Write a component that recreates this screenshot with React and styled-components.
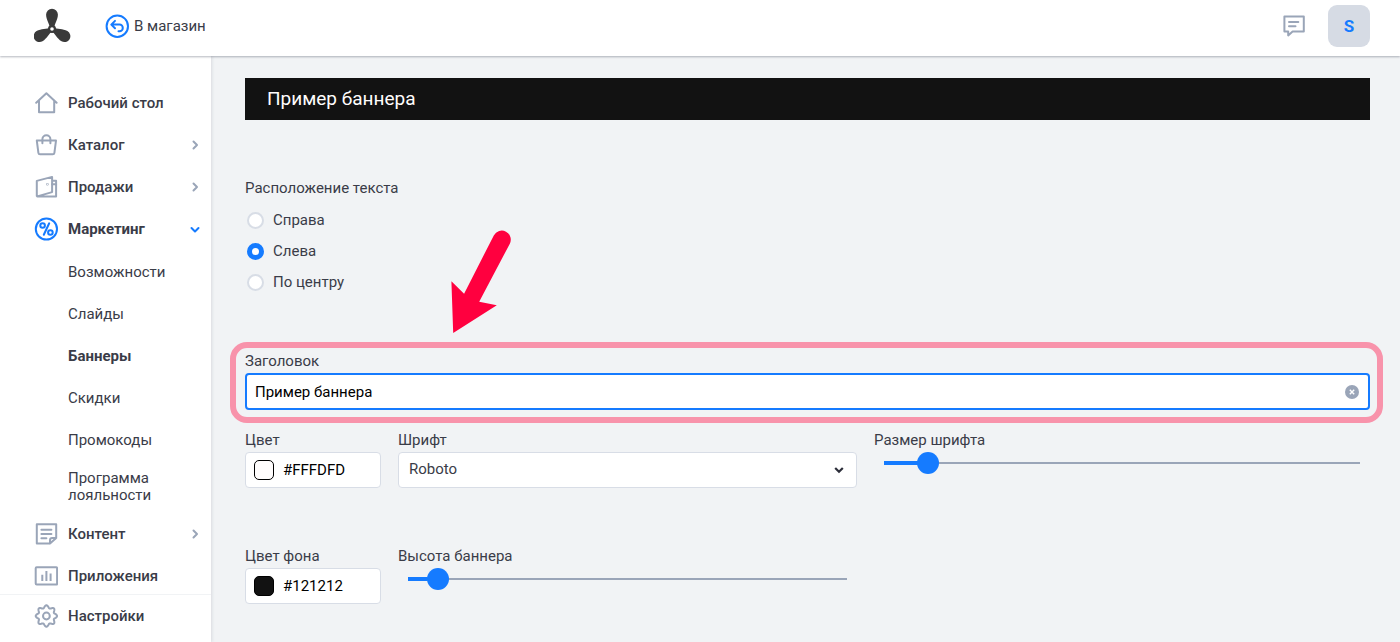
import React, { useState } from 'react';
import styled, { createGlobalStyle, ThemeProvider } from 'styled-components';

const theme = {
  text: '#3a3c48',
  blue: '#157bff',
  grey: '#9aa5b8',
  line: '#d8dde6',
  page: '#f1f3f5',
  accent: '#ff003f',
};

const GlobalStyle = createGlobalStyle`
  * {
    box-sizing: border-box;
  }

  body {
    margin: 0;
    background: ${(props) => props.theme.page};
    color: ${(props) => props.theme.text};
    font-family: Roboto, "Liberation Sans", sans-serif;
    font-size: 15px;
    line-height: 18px;
  }

  button,
  input,
  select {
    font: inherit;
  }
`;

const Shell = styled.div`
  display: flex;
  flex-direction: column;
  height: 100vh;
`;

const Header = styled.header`
  display: flex;
  align-items: center;
  flex: none;
  height: 56px;
  padding: 0 30px 4px 34px;
  background: #fff;
  box-shadow: 0 1px 2px rgba(40, 50, 70, 0.35);
  z-index: 2;
`;

const LogoLink = styled.a`
  display: flex;
  margin-right: 33px;
`;

const ShopLink = styled.a`
  display: flex;
  align-items: center;
  gap: 5px;
  color: ${(props) => props.theme.text};
  text-decoration: none;
`;

const HeaderActions = styled.div`
  display: flex;
  align-items: center;
  gap: 22px;
  margin-left: auto;
`;

const IconButton = styled.button`
  display: flex;
  padding: 0;
  border: 0;
  background: none;
  color: ${(props) => props.theme.grey};
  cursor: pointer;
`;

const Avatar = styled.button`
  width: 42px;
  height: 42px;
  padding: 0;
  border: 0;
  border-radius: 9px;
  background: #d6dbe4;
  color: ${(props) => props.theme.blue};
  font-size: 17px;
  font-weight: 700;
  cursor: pointer;
`;

const Body = styled.div`
  display: flex;
  flex: 1;
  min-height: 0;
`;

const Sidebar = styled.aside`
  display: flex;
  flex-direction: column;
  flex: none;
  width: 211px;
  background: #fff;
  box-shadow: 1px 0 3px rgba(40, 50, 70, 0.12);
  z-index: 1;
`;

const Nav = styled.nav`
  flex: 1;
  min-height: 0;
  padding-top: 26px;
  overflow: hidden;
`;

const NavList = styled.ul`
  margin: 0;
  padding: 0;
  list-style: none;
`;

const NavLink = styled.a`
  display: flex;
  align-items: center;
  gap: 10px;
  height: 42px;
  padding: 0 9px 0 34px;
  color: ${(props) => props.theme.text};
  font-weight: ${(props) => (props.$active ? 700 : 500)};
  text-decoration: none;

  > svg {
    flex: none;
    color: ${(props) => (props.$active ? props.theme.blue : props.theme.grey)};
  }

  > svg:nth-of-type(2) {
    margin-left: auto;
  }
`;

const SubList = styled(NavList)`
  padding-top: 1px;
`;

const SubLink = styled.a`
  display: flex;
  align-items: center;
  min-height: 42px;
  padding: 9px 40px 9px 68px;
  color: ${(props) => props.theme.text};
  font-weight: ${(props) => (props.$active ? 700 : 400)};
  line-height: 17px;
  text-decoration: none;
`;

const SidebarFooter = styled.div`
  flex: none;
  padding-bottom: 5px;
  border-top: 1px solid ${(props) => props.theme.page};
`;

const Main = styled.main`
  flex: 1;
  min-width: 0;
  padding: 22px 30px 32px 34px;
  overflow: auto;
`;

const Banner = styled.div`
  padding: 10px 22px;
  background: #121212;
  color: #fffdfd;
  font-size: 19px;
  line-height: 22px;
`;

const Position = styled.fieldset`
  position: relative;
  display: flex;
  flex-direction: column;
  gap: 13px;
  margin: 59px 0 0;
  padding: 0;
  border: 0;
`;

const Legend = styled.legend`
  margin-bottom: 14px;
  padding: 0;
`;

const RadioLabel = styled.label`
  display: flex;
  align-items: center;
  gap: 9px;
  padding-left: 2px;
`;

const Radio = styled.input`
  appearance: none;
  width: 17px;
  height: 17px;
  margin: 0;
  border: 2px solid ${(props) => props.theme.line};
  border-radius: 50%;
  background: #fff;

  &:checked {
    border: 5px solid ${(props) => props.theme.blue};
  }
`;

/* points from the radio group down to the title field */
const Pointer = styled.svg`
  position: absolute;
  top: 19px;
  left: 205px;
  fill: ${(props) => props.theme.accent};
  pointer-events: none;
`;

const TitleField = styled.div`
  position: relative;
  margin-top: 61px;

  &::after {
    content: '';
    position: absolute;
    inset: -10px -13px -13px -15px;
    border: 6px solid #f893ab;
    border-radius: 17px;
    pointer-events: none;
  }
`;

const Label = styled.label`
  display: block;
  margin-bottom: 3px;
`;

const InputWrap = styled.div`
  display: flex;
  align-items: center;
  height: 37px;
  padding: 0 9px 0 8px;
  border: 2px solid ${(props) => props.theme.blue};
  border-radius: 4px;
  background: #fff;
`;

const TextInput = styled.input`
  flex: 1;
  min-width: 0;
  padding: 0;
  border: 0;
  outline: 0;
  background: none;
  color: #000;
`;

const Row = styled.div`
  display: grid;
  grid-template-columns: 136px 459fr 496fr;
  column-gap: 17px;
  margin-top: ${(props) => props.$top}px;
`;

const ColorBox = styled.div`
  display: flex;
  align-items: center;
  gap: 9px;
  height: 36px;
  padding: 0 8px;
  border: 1px solid ${(props) => props.theme.line};
  border-radius: 4px;
  background: #fff;
`;

const Swatch = styled.span`
  flex: none;
  width: 20px;
  height: 20px;
  border: 1px solid #000;
  border-radius: 5px;
  background: ${(props) => props.$color};
`;

const SelectWrap = styled.div`
  display: grid;
  align-items: center;

  > * {
    grid-area: 1 / 1;
  }

  > svg {
    justify-self: end;
    margin-right: 13px;
    pointer-events: none;
  }
`;

const Select = styled.select`
  appearance: none;
  width: 100%;
  height: 36px;
  padding: 0 32px 2px 10px;
  border: 1px solid ${(props) => props.theme.line};
  border-radius: 4px;
  background: #fff;
  color: ${(props) => props.theme.text};
`;

const SliderWrap = styled.div`
  padding: 0 10px;
`;

const Slider = styled.input`
  appearance: none;
  display: block;
  width: 100%;
  height: 22px;
  margin: 0;
  background:
    linear-gradient(${(props) => props.theme.blue} 0 0) left center / var(--fill) 4px no-repeat,
    linear-gradient(${(props) => props.theme.grey} 0 0) left center / 100% 2px no-repeat;

  &::-webkit-slider-thumb {
    appearance: none;
    width: 22px;
    height: 22px;
    border-radius: 50%;
    background: ${(props) => props.theme.blue};
  }
`;

function Svg({ size = 24, children }) {
  return (
    <svg
      width={size}
      height={size}
      viewBox={`0 0 ${size} ${size}`}
      fill="none"
      stroke="currentColor"
      strokeWidth="2"
      strokeLinecap="round"
      strokeLinejoin="round"
      aria-hidden="true"
    >
      {children}
    </svg>
  );
}

function Logo() {
  const blade = 'M-1.8 0C-2.4-5-5.9-9-5.9-14.4A5.9 5.9 0 0 1 5.9-14.4C5.9-9 2.4-5 1.8 0Z';
  return (
    <svg width="38" height="36" viewBox="-18 -21 38 36" fill="#3a3a3a" aria-hidden="true">
      <path d={blade} />
      <path d={blade} transform="rotate(120)" />
      <path d={blade} transform="rotate(240)" />
      <circle r="4" />
      <circle r="1.8" fill="#fff" />
    </svg>
  );
}

function gearPath() {
  const points = [];
  for (let i = 0; i < 96; i += 1) {
    const a = (i / 96) * Math.PI * 2;
    const r = 9.4 + 1.3 * Math.cos(a * 8);
    points.push(`${(12.4 + r * Math.sin(a)).toFixed(2)} ${(12 - r * Math.cos(a)).toFixed(2)}`);
  }
  return `M${points.join('L')}Z`;
}

const icons = {
  home: <path d="M2.2 11.8 12.4 2.2l10.2 9.6M5 10v11.2h15.2V10" />,
  bag: (
    <>
      <path d="M2.8 7.6H22l-1.6 12.2q-.2 1.4-1.6 1.4H6q-1.400 0-1.600-1.400z" />
      <path d="M8.4 10.200v-4a4 4 0 0 1 8 0v4" />
    </>
  ),
  wallet: (
    <>
      <path d="M2.8 5.9 18.1 1.9v15.2L3.2 21.4h18.900V5.700h-4M2.800 5.900v15.200" />
      <path d="M18.1 9.300h4" />
      <circle cx="13.4" cy="9.2" r="0.3" />
    </>
  ),
  percent: (
    <>
      <circle cx="12.4" cy="12" r="10.6" />
      <circle cx="8.6" cy="8.5" r="2.3" />
      <circle cx="16.4" cy="15.5" r="2.3" />
      <path d="M15.2 6.3 9.8 17.8" />
    </>
  ),
  content: (
    <>
      <path d="M16 21.6H2.8V2.3h19.400V16L16 21.600v-3.400q0-2.200 2.200-2.200h4" />
      <path d="M7.4 7.7h10M7.4 12h10M7.4 16.3h5" />
    </>
  ),
  apps: (
    <>
      <rect x="1.7" y="3.2" width="21.4" height="17.4" rx="1" />
      <path d="M8.3 10.800v6.200M12.400 7v10M16.600 9.400v7.600" strokeLinecap="butt" />
    </>
  ),
  gear: (
    <>
      <path d={gearPath()} />
      <circle cx="12.4" cy="12" r="3.4" />
    </>
  ),
};

const submenu = ['Возможности', 'Слайды', 'Баннеры', 'Скидки', 'Промокоды', 'Программа лояльности'];

const menu = [
  { title: 'Рабочий стол', icon: 'home' },
  { title: 'Каталог', icon: 'bag', more: true },
  { title: 'Продажи', icon: 'wallet', more: true },
  { title: 'Маркетинг', icon: 'percent', active: true, more: true, items: submenu },
  { title: 'Контент', icon: 'content', more: true },
  { title: 'Приложения', icon: 'apps' },
];

function NavItem({ title, icon, active, more }) {
  return (
    <NavLink href="#" $active={active}>
      <Svg>{icons[icon]}</Svg>
      {title}
      {more && (
        <Svg size={14}>
          <path d={active ? 'm3.5 6 3.5 3.5L10.5 6' : 'M5.5 3.5 9 7l-3.5 3.5'} />
        </Svg>
      )}
    </NavLink>
  );
}

function ColorField({ id, label, value, onChange }) {
  return (
    <div>
      <Label htmlFor={id}>{label}</Label>
      <ColorBox>
        <Swatch $color={value} />
        <TextInput id={id} value={value} onChange={(e) => onChange(e.target.value)} />
      </ColorBox>
    </div>
  );
}

function RangeField({ id, label, value, onChange }) {
  return (
    <div>
      <Label htmlFor={id}>{label}</Label>
      <SliderWrap>
        <Slider
          id={id}
          type="range"
          min="0"
          max="1000"
          value={value}
          style={{ '--fill': `${value / 10}%` }}
          onChange={(e) => onChange(Number(e.target.value))}
        />
      </SliderWrap>
    </div>
  );
}

export default function App() {
  const [position, setPosition] = useState('Слева');
  const [title, setTitle] = useState('Пример баннера');
  const [color, setColor] = useState('#FFFDFD');
  const [background, setBackground] = useState('#121212');
  const [fontSize, setFontSize] = useState(72);
  const [height, setHeight] = useState(45);

  return (
    <ThemeProvider theme={theme}>
      <GlobalStyle />
      <Shell>
        <Header>
          <LogoLink href="#" aria-label="Logo">
            <Logo />
          </LogoLink>
          <ShopLink href="#">
            <Svg>
              <g stroke={theme.blue}>
                <circle cx="12.3" cy="12.2" r="10.7" />
                <path d="M10 6.9l-3.7 3.7 3.7 3.7M6.6 10.6h7.9a3.3 3.3 0 0 1 0 6.6h-1" />
              </g>
            </Svg>
            В магазин
          </ShopLink>
          <HeaderActions>
            <IconButton type="button" aria-label="Сообщения">
              <Svg>
                <path d="M2.4 2.5h19.4v15H10.6l-4.4 3.9v-3.9H2.4z" />
                <path d="M7 8.1h9.3M7 12.2h6.5" />
              </Svg>
            </IconButton>
            <Avatar type="button">S</Avatar>
          </HeaderActions>
        </Header>
        <Body>
          <Sidebar>
            <Nav>
              <NavList>
                {menu.map((item) => (
                  <li key={item.title}>
                    <NavItem {...item} />
                    {item.items && (
                      <SubList>
                        {item.items.map((name) => (
                          <li key={name}>
                            <SubLink href="#" $active={name === 'Баннеры'}>
                              {name}
                            </SubLink>
                          </li>
                        ))}
                      </SubList>
                    )}
                  </li>
                ))}
              </NavList>
            </Nav>
            <SidebarFooter>
              <NavItem title="Настройки" icon="gear" />
            </SidebarFooter>
          </Sidebar>
          <Main>
            <Banner>{title}</Banner>
            <Position>
              <Legend>Расположение текста</Legend>
              {['Справа', 'Слева', 'По центру'].map((name) => (
                <RadioLabel key={name}>
                  <Radio
                    type="radio"
                    name="position"
                    checked={position === name}
                    onChange={() => setPosition(name)}
                  />
                  {name}
                </RadioLabel>
              ))}
              <Pointer width="62" height="104" viewBox="0 0 62 104" aria-hidden="true">
                <path d="M43.8 5.4A9 9 0 0 1 59.7 13.9L29.2 71.8 46.8 75.2 3.2 103 1.4 51.2 14.1 63.7Z" />
              </Pointer>
            </Position>
            <TitleField>
              <Label htmlFor="title">Заголовок</Label>
              <InputWrap>
                <TextInput id="title" value={title} onChange={(e) => setTitle(e.target.value)} />
                <IconButton type="button" aria-label="Очистить" onClick={() => setTitle('')}>
                  <svg width="14" height="14" viewBox="0 0 14 14" aria-hidden="true">
                    <circle cx="7" cy="7" r="7" fill="currentColor" />
                    <path d="m4.8 4.8 4.4 4.4m0-4.4L4.8 9.2" stroke="#fff" strokeWidth="1.4" />
                  </svg>
                </IconButton>
              </InputWrap>
            </TitleField>
            <Row $top={21}>
              <ColorField id="color" label="Цвет" value={color} onChange={setColor} />
              <div>
                <Label htmlFor="font">Шрифт</Label>
                <SelectWrap>
                  <Select id="font" defaultValue="Roboto">
                    <option>Roboto</option>
                  </Select>
                  <svg width="10" height="8" viewBox="0 0 10 8" fill="none" aria-hidden="true">
                    <path d="m1.2 2 3.800 3.800L8.800 2" stroke="#2c2e3a" strokeWidth="2.2" />
                  </svg>
                </SelectWrap>
              </div>
              <RangeField id="size" label="Размер шрифта" value={fontSize} onChange={setFontSize} />
            </Row>
            <Row $top={59}>
              <ColorField id="background" label="Цвет фона" value={background} onChange={setBackground} />
              <RangeField id="height" label="Высота баннера" value={height} onChange={setHeight} />
            </Row>
          </Main>
        </Body>
      </Shell>
    </ThemeProvider>
  );
}
